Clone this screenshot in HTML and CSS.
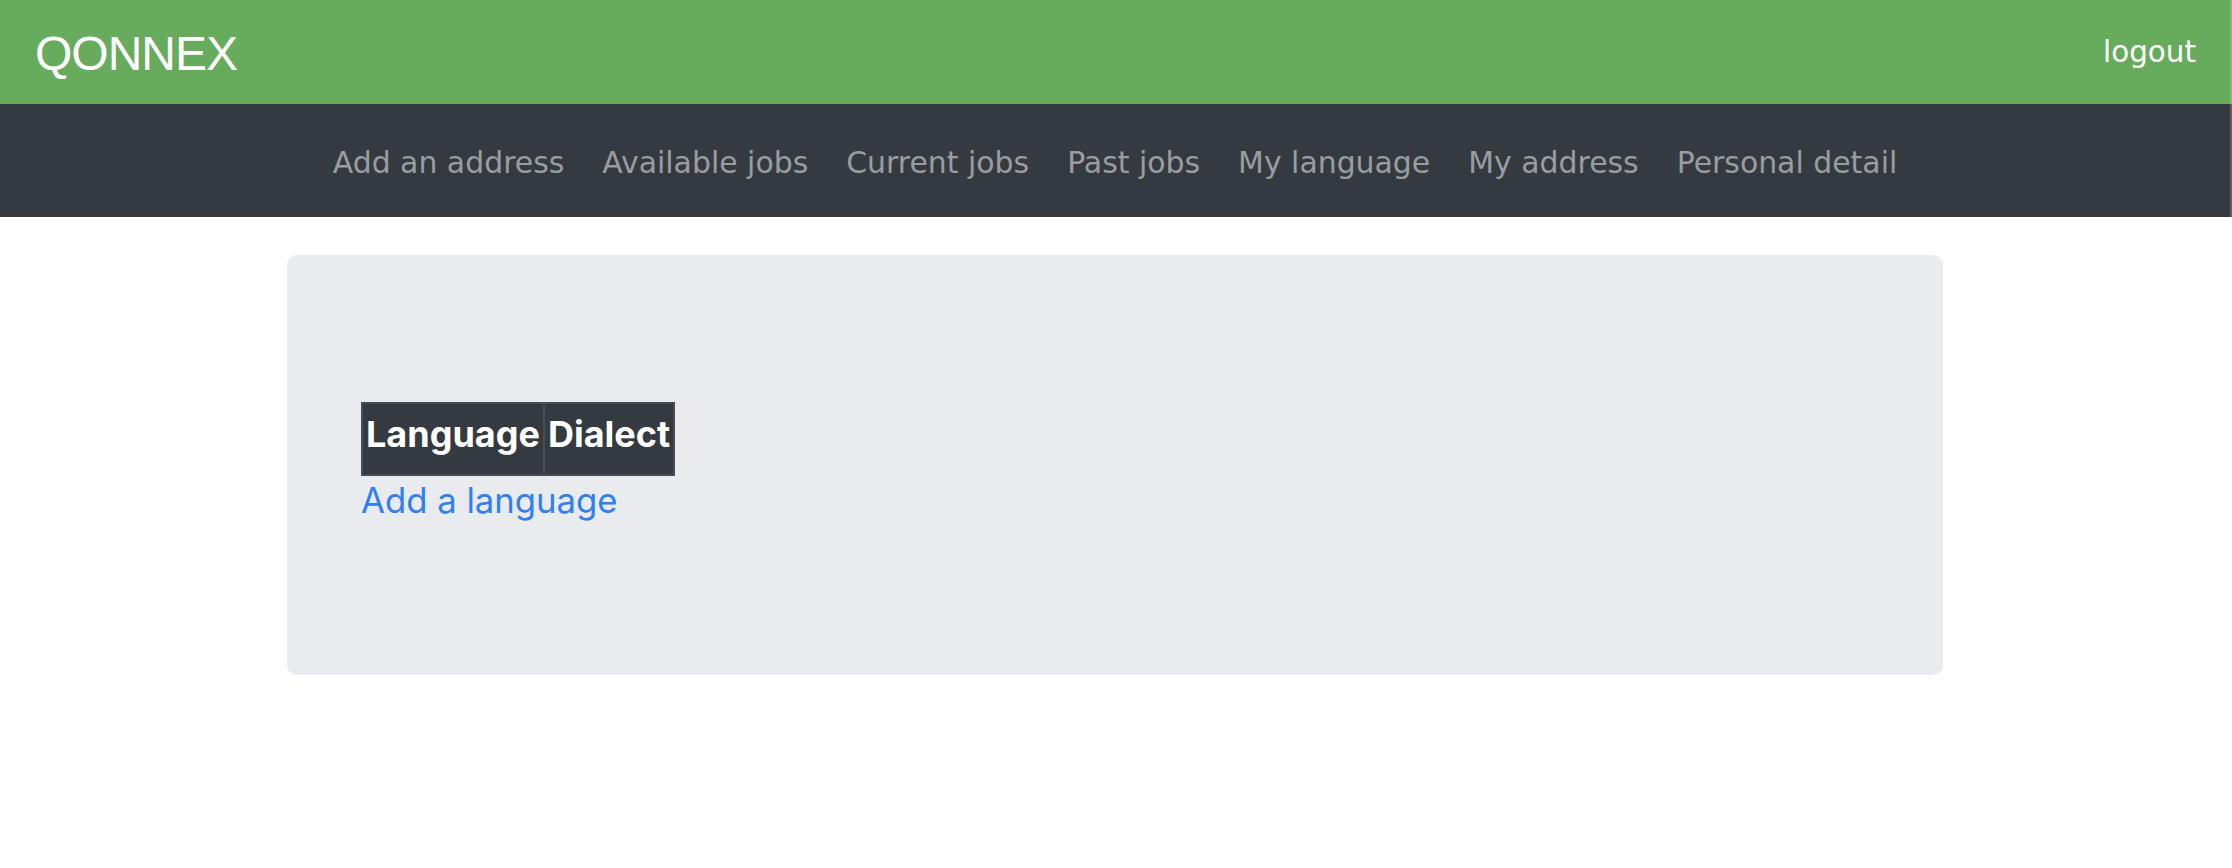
FILE: index.html
```html
<!DOCTYPE html>
<html lang="en">
<head>
<meta charset="utf-8">
<title>QONNEX</title>
<link rel="stylesheet" href="styles.css">
</head>
<body>
<header class="topbar">
  <a class="brand" href="#">QONNEX</a>
  <a class="logout" href="#">logout</a>
</header>
<nav class="menu">
  <a class="menu-link" href="#">Add an address</a>
  <a class="menu-link" href="#">Available jobs</a>
  <a class="menu-link" href="#">Current jobs</a>
  <a class="menu-link" href="#">Past jobs</a>
  <a class="menu-link" href="#">My language</a>
  <a class="menu-link" href="#">My address</a>
  <a class="menu-link" href="#">Personal detail</a>
</nav>
<main class="page">
  <section class="panel">
    <table class="lang-table">
      <thead>
        <tr><th>Language</th><th>Dialect</th></tr>
      </thead>
    </table>
    <a class="add-link" href="#">Add a language</a>
  </section>
</main>
</body>
</html>
```
FILE: styles.css
```css
* { box-sizing: border-box; }
html, body { margin: 0; padding: 0; background: #ffffff; }
body { font-family: "DejaVu Sans", sans-serif; }
a { text-decoration: none; }

.topbar {
  height: 104px;
  background: #66ac5c;
  display: flex;
  align-items: center;
  justify-content: space-between;
  padding: 0 35px 0 35px;
  border-right: 2px solid #7fba77;
}
.brand {
  font-family: "Liberation Sans", Arial, sans-serif;
  font-size: 48px;
  letter-spacing: -1px;
  color: #ffffff;
  padding-top: 4px;
  line-height: 54px;
}
.logout {
  font-family: "DejaVu Sans", sans-serif;
  font-size: 29.4px;
  color: #ffffff;
  line-height: 35px;
  margin-right: -1px;
}

.menu {
  height: 113px;
  background: #343a40;
  display: flex;
  align-items: center;
  justify-content: center;
  padding-top: 3px;
  border-right: 2px solid #5d6166;
}
.menu-link {
  font-family: "DejaVu Sans", sans-serif;
  font-size: 29.9px;
  line-height: 35px;
  color: #9a9da0;
  padding: 0 19px;
}

.page {
  padding-top: 38px;
  display: flex;
  justify-content: center;
  padding-right: 2px;
}
.panel {
  width: 1656px;
  background: #e9ebef;
  border-radius: 10px;
  padding: 147px 74px 151px 74px;
  display: flex;
  flex-direction: column;
  align-items: flex-start;
}
.lang-table {
  border-collapse: collapse;
  background: #343a40;
  border: 2px solid #454d55;
}
.lang-table th {
  font-family: Inter, "Liberation Sans", sans-serif;
  font-weight: 700;
  font-size: 36px;
  line-height: 52px;
  color: #ffffff;
  text-align: left;
  padding: 4px 3px 14px 3px;
  border: 2px solid #454d55;
}
.add-link {
  font-family: Inter, "Liberation Sans", sans-serif;
  font-size: 34.7px;
  line-height: 48px;
  color: #3080f5;
}
```
